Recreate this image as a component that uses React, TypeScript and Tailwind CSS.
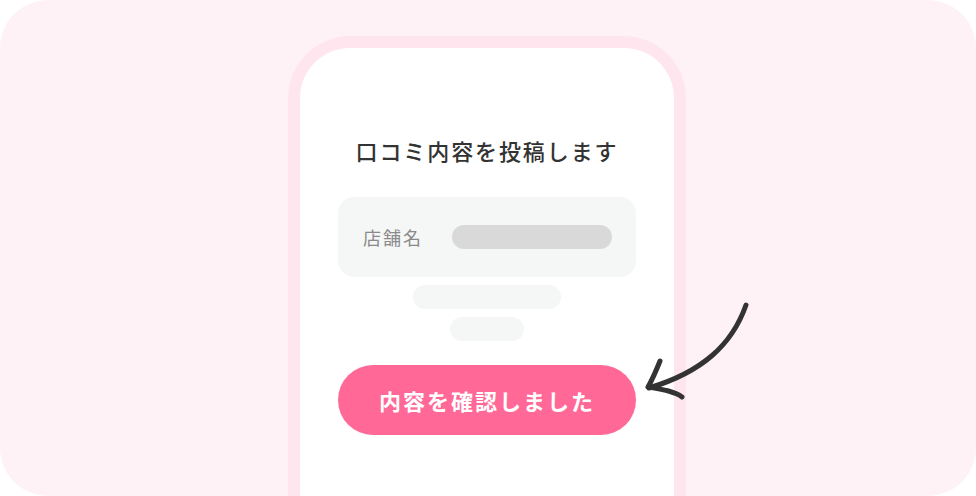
export default function App() {
  return (
    <div className="w-[976px] h-[496px] bg-white" style={{ fontFamily: '"Noto Sans CJK JP", "Noto Sans", sans-serif' }}>
      <div className="relative h-full w-full overflow-hidden rounded-[48px] bg-[#fff2f6]">
        {/* Phone */}
        <div className="flex justify-center pt-9 pr-[2px]">
          <div className="h-[520px] w-[398px] rounded-t-[62px] border-[12px] border-b-0 border-[#ffe6ee] bg-white">
            <div className="flex flex-col items-center pt-[86px]">
              <h1 className="text-[22px] leading-[32px] font-medium tracking-[1.9px] text-[#333333]">
                口コミ内容を投稿します
              </h1>

              {/* Store name row */}
              <div className="mt-[31px] flex h-[80px] w-[298px] items-center gap-[29px] rounded-2xl bg-[#f5f6f6] pl-[25px] pr-[24px]">
                <span className="text-[18px] leading-none tracking-[2px] text-[#8a8a8a]">店舗名</span>
                <div className="h-6 flex-1 rounded-full bg-[#d9d9d9]" />
              </div>

              {/* Placeholder lines */}
              <div className="mt-2 h-6 w-[148px] rounded-full bg-[#f5f6f6]" />
              <div className="mt-2 h-6 w-[74px] rounded-full bg-[#f5f6f6]" />

              <button className="mt-6 flex h-[70px] w-[298px] items-center justify-center rounded-full bg-[#ff6897] text-[22px] font-bold tracking-[2px] text-white">
                内容を確認しました
              </button>
            </div>
          </div>
        </div>

        {/* Hand-drawn arrow */}
        <svg
          className="absolute left-0 top-0"
          width="976"
          height="496"
          viewBox="0 0 976 496"
          fill="none"
          stroke="#333333"
          strokeWidth="5"
          strokeLinecap="round"
          strokeLinejoin="round"
        >
          <path d="M746 305 C 732 345, 702 372, 649 388" />
          <path d="M660 361 C 656 371, 652 380, 648 387 C 660 389, 674 391, 682 397" />
        </svg>
      </div>
    </div>
  );
}
